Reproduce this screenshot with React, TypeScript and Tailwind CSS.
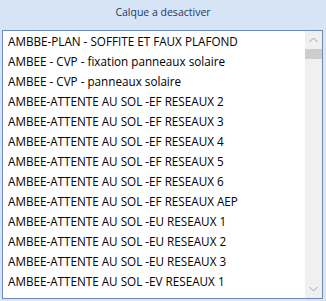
import React from "react";

const items = [
  "AMBBE-PLAN - SOFFITE ET FAUX PLAFOND",
  "AMBEE - CVP - fixation panneaux solaire",
  "AMBEE - CVP - panneaux solaire",
  "AMBEE-ATTENTE AU SOL -EF RESEAUX 2",
  "AMBEE-ATTENTE AU SOL -EF RESEAUX 3",
  "AMBEE-ATTENTE AU SOL -EF RESEAUX 4",
  "AMBEE-ATTENTE AU SOL -EF RESEAUX 5",
  "AMBEE-ATTENTE AU SOL -EF RESEAUX 6",
  "AMBEE-ATTENTE AU SOL -EF RESEAUX AEP",
  "AMBEE-ATTENTE AU SOL -EU RESEAUX 1",
  "AMBEE-ATTENTE AU SOL -EU RESEAUX 2",
  "AMBEE-ATTENTE AU SOL -EU RESEAUX 3",
  "AMBEE-ATTENTE AU SOL -EV RESEAUX 1",
];

export default function App() {
  return (
    <div
      className="w-[326px] h-[301px] bg-[#d6e4f5] flex flex-col overflow-hidden"
      style={{ fontFamily: '"Open Sans", "Noto Sans", sans-serif' }}
    >
      <div className="h-[30px] flex items-center justify-center pb-[4px] text-[10.5px] text-[#1e395b]">
        Calque a desactiver
      </div>
      <div className="ml-[2px] w-[321px] h-[269px] border border-[#6d8bb5] bg-white flex overflow-hidden">
        <div className="flex-1 flex flex-col pt-[1px] pl-[5px] overflow-hidden">
          {items.map((t) => (
            <div key={t} className="h-[20px] shrink-0 flex items-center text-[11.7px] text-black whitespace-nowrap">
              {t}
            </div>
          ))}
        </div>
        <div className="w-[17px] bg-[#f0f0f0] flex flex-col">
          <div className="h-[18px] flex items-center justify-center">
            <svg width="9" height="6" viewBox="0 0 9 6">
              <path d="M0.5 5 L4.5 1 L8.5 5" fill="none" stroke="#a3a3a3" strokeWidth="1" />
            </svg>
          </div>
          <div className="h-[10px] mx-0 bg-[#cdcdcd]" />
          <div className="flex-1" />
          <div className="h-[18px] flex items-center justify-center">
            <svg width="9" height="6" viewBox="0 0 9 6">
              <path d="M0.5 1 L4.5 5 L8.5 1" fill="none" stroke="#a3a3a3" strokeWidth="1" />
            </svg>
          </div>
        </div>
      </div>
    </div>
  );
}
